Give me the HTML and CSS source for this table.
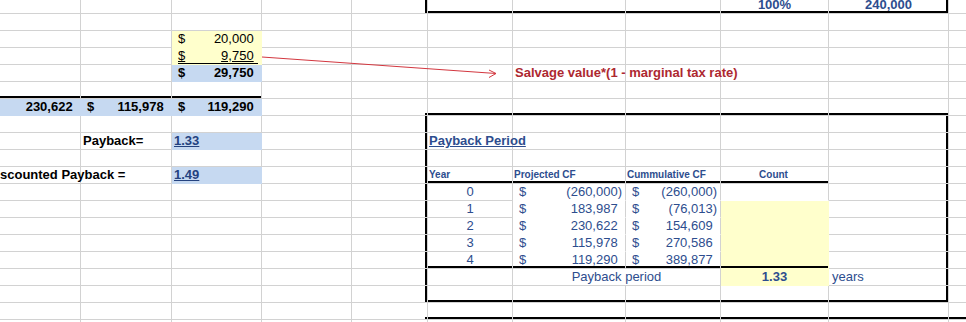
FILE: index.html
```html
<!DOCTYPE html>
<html>
<head>
<meta charset="utf-8">
<title>Payback Period</title>
<link rel="stylesheet" href="styles.css">
</head>
<body>
<div class="sheet">
<table class="grid">
<colgroup>
<col class="c0"><col class="c1"><col class="c2"><col class="c3"><col class="c4"><col class="c5"><col class="c6"><col class="c7"><col class="c8"><col class="c9"><col class="c10">
</colgroup>
<tbody>
<tr>
<td></td><td></td><td></td><td></td><td class="br"></td>
<td class="bb"></td><td class="bb"></td><td class="bb"></td>
<td class="bb center blue bold">100%</td>
<td class="bbr center blue bold">240,000</td>
<td></td>
</tr>
<tr><td></td><td></td><td></td><td></td><td></td><td></td><td></td><td></td><td></td><td></td><td></td></tr>
<tr>
<td></td><td></td>
<td class="yellow"><div class="acct"><span class="cur">$</span><span>20,000<span class="rp">)</span></span></div></td>
<td></td><td></td><td></td><td></td><td></td><td></td><td></td><td></td>
</tr>
<tr>
<td></td><td></td>
<td class="yellow"><div class="acct uline"><span class="cur u">$</span><span><span class="u">9,750</span><span class="rp">)</span></span></div></td>
<td></td><td></td><td></td><td></td><td></td><td></td><td></td><td></td>
</tr>
<tr>
<td></td><td></td>
<td class="lblue bold"><div class="acct"><span class="cur">$</span><span>29,750<span class="rp">)</span></span></div></td>
<td></td><td></td><td></td>
<td class="note">Salvage value*(1 - marginal tax rate)</td>
<td></td><td></td><td></td><td></td>
</tr>
<tr>
<td class="bb"></td><td class="bb"></td><td class="bb"></td>
<td></td><td></td><td></td><td></td><td></td><td></td><td></td><td></td>
</tr>
<tr>
<td class="lblue bold right">230,622<span class="rp">)</span></td>
<td class="lblue bold"><div class="acct"><span class="cur">$</span><span>115,978<span class="rp">)</span></span></div></td>
<td class="lblue bold"><div class="acct"><span class="cur">$</span><span>119,290<span class="rp">)</span></span></div></td>
<td></td><td class="corner"></td>
<td class="bb"></td><td class="bb"></td><td class="bb"></td><td class="bb"></td><td class="bb"></td>
<td></td>
</tr>
<tr>
<td></td><td></td><td></td><td></td><td class="br"></td>
<td></td><td></td><td></td><td></td><td class="br"></td><td></td>
</tr>
<tr>
<td></td>
<td class="bold label">Payback=</td>
<td class="lblue link">1.33</td>
<td></td><td class="br"></td>
<td class="title">Payback Period</td>
<td></td><td></td><td></td><td class="br"></td><td></td>
</tr>
<tr>
<td></td><td></td><td></td><td></td><td class="br"></td>
<td></td><td></td><td></td><td></td><td class="br"></td><td></td>
</tr>
<tr>
<td class="bold clipped"><span class="shift">Discounted Payback =</span></td>
<td></td>
<td class="lblue link">1.49</td>
<td></td><td class="br"></td>
<td class="bb hdr">Year</td>
<td class="bb hdr">Projected CF</td>
<td class="bb hdr">Cummulative CF</td>
<td class="bb hdr center">Count</td>
<td class="br"></td><td></td>
</tr>
<tr>
<td></td><td></td><td></td><td></td><td class="br"></td>
<td class="data center">0</td>
<td class="data nh"><div class="acct"><span class="cur">$</span><span>(260,000)</span></div></td>
<td class="data nh"><div class="acct"><span class="cur">$</span><span>(260,000)</span></div></td>
<td class="nh"></td>
<td class="br"></td><td></td>
</tr>
<tr>
<td></td><td></td><td></td><td></td><td class="br"></td>
<td class="data center">1</td>
<td class="data nh"><div class="acct"><span class="cur">$</span><span>183,987<span class="rp">)</span></span></div></td>
<td class="data nh"><div class="acct"><span class="cur">$</span><span>(76,013)</span></div></td>
<td class="yellow"></td>
<td class="br"></td><td></td>
</tr>
<tr>
<td></td><td></td><td></td><td></td><td class="br"></td>
<td class="data center">2</td>
<td class="data nh"><div class="acct"><span class="cur">$</span><span>230,622<span class="rp">)</span></span></div></td>
<td class="data nh"><div class="acct"><span class="cur">$</span><span>154,609<span class="rp">)</span></span></div></td>
<td class="yellow"></td>
<td class="br"></td><td></td>
</tr>
<tr>
<td></td><td></td><td></td><td></td><td class="br"></td>
<td class="data center">3</td>
<td class="data nh"><div class="acct"><span class="cur">$</span><span>115,978<span class="rp">)</span></span></div></td>
<td class="data nh"><div class="acct"><span class="cur">$</span><span>270,586<span class="rp">)</span></span></div></td>
<td class="yellow"></td>
<td class="br"></td><td></td>
</tr>
<tr>
<td></td><td></td><td></td><td></td><td class="br"></td>
<td class="data center bb">4</td>
<td class="data bb"><div class="acct"><span class="cur">$</span><span>119,290<span class="rp">)</span></span></div></td>
<td class="data bb"><div class="acct"><span class="cur">$</span><span>389,877<span class="rp">)</span></span></div></td>
<td class="yellow bb"></td>
<td class="br"></td><td></td>
</tr>
<tr>
<td></td><td></td><td></td><td></td><td class="br"></td>
<td></td>
<td class="data center" colspan="2">Payback period</td>
<td class="yellow center hdr13">1.33</td>
<td class="br data">years</td><td></td>
</tr>
<tr>
<td></td><td></td><td></td><td></td><td class="br"></td>
<td class="bb"></td><td class="bb"></td><td class="bb"></td><td class="bb"></td><td class="bbr"></td><td></td>
</tr>
<tr>
<td></td><td></td><td></td><td></td><td class="corner"></td>
<td class="bb"></td><td class="bb"></td><td class="bb"></td><td class="bb"></td><td class="bb"></td><td class="bb"></td>
</tr>
<tr><td></td><td></td><td></td><td></td><td></td><td></td><td></td><td></td><td></td><td></td><td></td></tr>
</tbody>
</table>
<svg class="arrow" width="966" height="322" viewBox="0 0 966 322" aria-hidden="true">
<line x1="262" y1="57" x2="496" y2="73.5" stroke="#d3373f" stroke-width="1"/>
<polyline points="489,70 496,73.5 489,77.5" fill="none" stroke="#d3373f" stroke-width="1"/>
</svg>
</div>
</body>
</html>
```
FILE: styles.css
```css
html, body {
  margin: 0;
  padding: 0;
  background: #ffffff;
  overflow: hidden;
}

.sheet {
  position: relative;
  width: 966px;
  height: 322px;
  overflow: hidden;
  font-family: "Liberation Sans", Arial, sans-serif;
  font-size: 13px;
  color: #000;
}

.grid {
  border-collapse: separate;
  border-spacing: 0;
  table-layout: fixed;
  width: 967px;
  margin-top: -3px;
}

.c0 { width: 81px; }
.c1 { width: 91px; }
.c2 { width: 90px; }
.c3 { width: 90px; }
.c4 { width: 76px; }
.c5 { width: 85px; }
.c6 { width: 113px; }
.c7 { width: 95px; }
.c8 { width: 108px; }
.c9 { width: 120px; }
.c10 { width: 18px; }

.grid tr { height: 17px; }

.grid td {
  box-sizing: border-box;
  height: 17px;
  padding: 0 3px;
  border-right: 1px solid #d2d2d2;
  border-bottom: 1px solid #d2d2d2;
  line-height: 16px;
  white-space: nowrap;
  vertical-align: bottom;
  overflow: visible;
}

.bb { box-shadow: inset 0 -2px 0 #000; }
.br { box-shadow: inset -2px 0 0 #000; }
.bbr { box-shadow: inset 0 -2px 0 #000, inset -2px 0 0 #000; }
.grid td.corner {
  background: linear-gradient(#000, #000) no-repeat right bottom / 2px 2px;
}

.bold { font-weight: bold; }
.center { text-align: center; }
.right { text-align: right; }
.blue { color: #2d4d8e; }

.grid td.yellow {
  background-color: #ffffcc;
  border-bottom-color: #ffffcc;
  border-right-color: #ffffcc;
}
.grid td.lblue {
  background-color: #c6d9f1;
  border-bottom-color: #c6d9f1;
  border-right-color: #c6d9f1;
}
.grid td.nh { border-bottom-color: #ffffff; }

.acct {
  display: flex;
  justify-content: space-between;
  height: 16px;
}
.cur { margin-left: 3px; }
.rp { visibility: hidden; }
.u { text-decoration: underline; }
.uline { box-shadow: inset 0 -1px 0 #000; margin-left: 3px; }
.uline .cur { margin-left: 0; }

.note {
  color: #ad2830;
  font-weight: bold;
  padding-left: 2px !important;
}

.label { padding-left: 2px !important; }

.link {
  color: #24427f;
  font-weight: bold;
  text-decoration: underline;
  padding-left: 2px !important;
}

.title {
  color: #2d4d8e;
  font-weight: bold;
  text-decoration: underline;
  padding-left: 1px !important;
}

.clipped { padding-left: 0 !important; }
.shift { margin-left: -13px; }

.hdr {
  color: #2d4d8e;
  font-weight: bold;
  font-size: 10px;
  padding-left: 1px !important;
}

.hdr13 {
  color: #2d4d8e;
  font-weight: bold;
}

.data { color: #2d4d8e; }

.arrow {
  position: absolute;
  left: 0;
  top: 0;
  pointer-events: none;
}
```
